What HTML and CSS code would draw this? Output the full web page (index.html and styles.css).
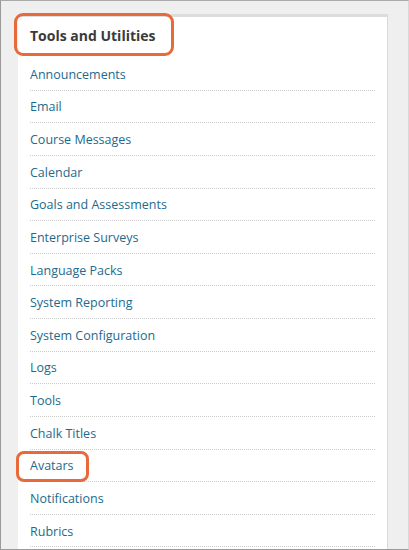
FILE: index.html
```html
<!DOCTYPE html>
<html lang="en">
<head>
<meta charset="utf-8">
<title>Tools and Utilities</title>
<link rel="stylesheet" href="styles.css">
</head>
<body>
<div class="frame">
  <div class="panel">
    <div class="panel-header">
      <h2 class="panel-title">Tools and Utilities</h2>
      <span class="callout callout-header"></span>
    </div>
    <ul class="tool-list">
      <li class="tool-item"><a href="#">Announcements</a></li>
      <li class="tool-item"><a href="#">Email</a></li>
      <li class="tool-item"><a href="#">Course Messages</a></li>
      <li class="tool-item"><a href="#">Calendar</a></li>
      <li class="tool-item"><a href="#">Goals and Assessments</a></li>
      <li class="tool-item"><a href="#">Enterprise Surveys</a></li>
      <li class="tool-item"><a href="#">Language Packs</a></li>
      <li class="tool-item"><a href="#">System Reporting</a></li>
      <li class="tool-item"><a href="#">System Configuration</a></li>
      <li class="tool-item"><a href="#">Logs</a></li>
      <li class="tool-item"><a href="#">Tools</a></li>
      <li class="tool-item"><a href="#">Chalk Titles</a></li>
      <li class="tool-item"><a href="#">Avatars</a><span class="callout callout-item"></span></li>
      <li class="tool-item"><a href="#">Notifications</a></li>
      <li class="tool-item"><a href="#">Rubrics</a></li>
    </ul>
  </div>
</div>
</body>
</html>
```
FILE: styles.css
```css
* { box-sizing: border-box; }
html, body { margin: 0; padding: 0; }
body {
  font-family: "Open Sans", "Liberation Sans", sans-serif;
  background: #ffffff;
}
.frame {
  width: 409px;
  height: 550px;
  overflow: hidden;
  background: #efefef;
  border-top: 1px solid #a9a9a9;
  border-left: 1px solid #9a9a9a;
  border-bottom: 1px solid #9a9a9a;
  border-right: 1px solid #d8d8d8;
  padding: 13px 0 0 17px;
}
.panel {
  width: 370px;
  height: 600px;
  background: #ffffff;
  border-top: 3px solid #dcdcdc;
  border-right: 1px solid #dadada;
}
.panel-header {
  position: relative;
  height: 41px;
  padding: 0 12px 3px;
  display: flex;
  align-items: center;
}
.panel-title {
  margin: 0;
  font-size: 14px;
  font-weight: 700;
  color: #3a3a3a;
  line-height: 20px;
}
.callout {
  position: absolute;
  border: 3px solid #e8693a;
  border-radius: 9px;
  pointer-events: none;
}
.callout-header {
  left: -4px;
  top: -4px;
  width: 160px;
  height: 43px;
}
.tool-list {
  list-style: none;
  margin: 0 12px;
  padding: 0;
}
.tool-item {
  position: relative;
  height: 32.64px;
  padding-top: 2px;
  display: flex;
  align-items: center;
  border-bottom: 1px dotted #cccccc;
}
.tool-item a {
  color: #1d6a8e;
  text-decoration: none;
  font-size: 12.5px;
  line-height: 20px;
}
.callout-item {
  left: -14px;
  top: 1px;
  width: 73px;
  height: 31px;
  border-radius: 8px;
}
```
